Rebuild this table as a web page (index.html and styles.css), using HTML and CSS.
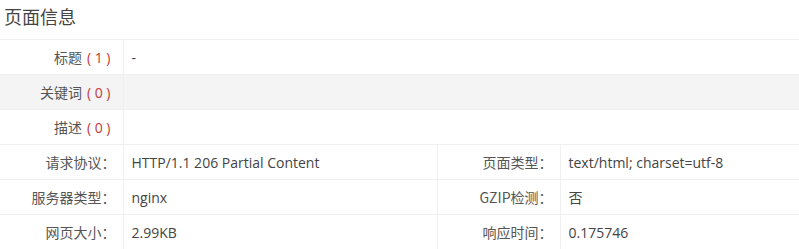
FILE: index.html
```html
<!DOCTYPE html>
<html lang="zh">
<head>
<meta charset="utf-8">
<title>页面信息</title>
<link rel="stylesheet" href="styles.css">
</head>
<body>
<section class="panel">
  <h2 class="panel-title">页面信息</h2>
  <table class="info">
    <colgroup>
      <col class="c-label">
      <col class="c-value">
      <col class="c-label2">
      <col>
    </colgroup>
    <tbody>
      <tr>
        <th>标题<span class="count">( 1 )</span></th>
        <td colspan="3">-</td>
      </tr>
      <tr class="alt">
        <th>关键词<span class="count">( 0 )</span></th>
        <td colspan="3"></td>
      </tr>
      <tr>
        <th>描述<span class="count">( 0 )</span></th>
        <td colspan="3"></td>
      </tr>
      <tr>
        <th>请求协议<span class="colon">：</span></th>
        <td>HTTP/1.1 206 Partial Content</td>
        <th>页面类型<span class="colon">：</span></th>
        <td>text/html; charset=utf-8</td>
      </tr>
      <tr>
        <th>服务器类型<span class="colon">：</span></th>
        <td>nginx</td>
        <th>GZIP检测<span class="colon">：</span></th>
        <td>否</td>
      </tr>
      <tr>
        <th>网页大小<span class="colon">：</span></th>
        <td>2.99KB</td>
        <th>响应时间<span class="colon">：</span></th>
        <td>0.175746</td>
      </tr>
    </tbody>
  </table>
</section>
</body>
</html>
```

FILE: styles.css
```css
html, body {
  margin: 0;
  padding: 0;
  background: #fff;
}

body {
  font-family: "Open Sans", "Noto Sans CJK SC", sans-serif;
  color: #444;
}

.panel-title {
  margin: 0;
  padding: 4px 4px 0;
  height: 35px;
  font-size: 18px;
  font-weight: normal;
  line-height: 24px;
  color: #444;
  font-family: "Noto Sans CJK SC", sans-serif;
}

.info {
  width: 100%;
  border-collapse: collapse;
  table-layout: fixed;
  font-size: 14px;
}

.c-label { width: 123px; }
.c-value { width: 314px; }
.c-label2 { width: 123px; }

.info tr {
  height: 35px;
}

.info th,
.info td {
  border: 1px solid #f0f0f0;
  padding: 0 8px;
  height: 34px;
  vertical-align: middle;
  white-space: nowrap;
}

.info th:first-child,
.info td:first-child {
  border-left: none;
}

.info td:last-child {
  border-right: none;
}

.info th {
  text-align: right;
  font-weight: normal;
  padding-right: 7px;
  font-family: "Noto Sans CJK SC", sans-serif;
  color: #555;
}

.info .alt th,
.info .alt td {
  background: #f4f4f4;
}

.count {
  font-family: "Open Sans", sans-serif;
  color: #c0393b;
  padding: 0 5px 0 5px;
}

.colon {
  font-family: "Noto Sans CJK TC", sans-serif;
}
```
